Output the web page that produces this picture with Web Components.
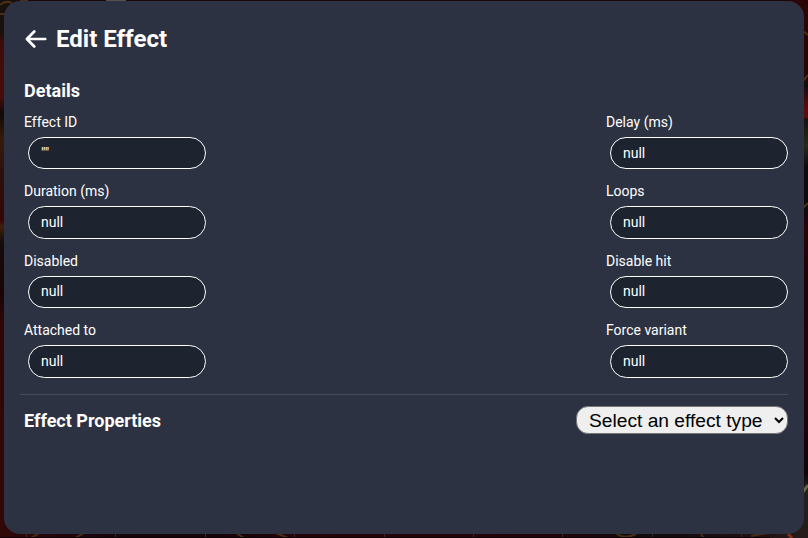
<!DOCTYPE html>
<html lang="en"><head><meta charset="utf-8"><title>Edit Effect</title>
<style>
html{background:#180407}
html,body{margin:0;height:100%;overflow:hidden}
body{font-family:Roboto,"Liberation Sans",sans-serif;color:#fff}
</style></head><body>
<effect-editor></effect-editor>
<script>
class SceneBackdrop extends HTMLElement{
 constructor(){super();this.attachShadow({mode:'open'}).innerHTML=`
<style>:host{position:absolute;inset:0;z-index:-1}svg{display:block}</style>
<svg width="808" height="538" viewBox="0 0 808 538">
<defs><linearGradient id="l" x2="0" y2="1"><stop stop-color="#17100c"/><stop offset=".06" stop-color="#17100c"/><stop offset=".08" stop-color="#400b0b"/><stop offset=".18" stop-color="#480c0b"/><stop offset=".21" stop-color="#100808"/><stop offset=".26" stop-color="#361b0b"/><stop offset=".32" stop-color="#2c1010"/><stop offset=".41" stop-color="#350505"/><stop offset=".42" stop-color="#40200a"/><stop offset=".45" stop-color="#160b0d"/><stop offset=".54" stop-color="#180406"/><stop offset=".6" stop-color="#2e0607"/><stop offset=".8" stop-color="#300809"/><stop offset="1" stop-color="#300807"/></linearGradient>
<linearGradient id="r" x2="0" y2="1"><stop stop-color="#2b0508"/><stop offset=".15" stop-color="#240608"/><stop offset=".16" stop-color="#0f0d0e"/><stop offset=".19" stop-color="#4d0b0e"/><stop offset=".217" stop-color="#620c0e"/><stop offset=".222" stop-color="#19100e"/><stop offset=".27" stop-color="#28291f"/><stop offset=".31" stop-color="#100b0b"/><stop offset=".38" stop-color="#0e090b"/><stop offset=".43" stop-color="#290409"/><stop offset=".52" stop-color="#1b0306"/><stop offset=".68" stop-color="#210609"/><stop offset=".88" stop-color="#130406"/><stop offset=".91" stop-color="#23201d"/><stop offset="1" stop-color="#261b1c"/></linearGradient>
<linearGradient id="b"><stop stop-color="#300807"/><stop offset=".12" stop-color="#1b050c"/><stop offset=".27" stop-color="#170309"/><stop offset=".4" stop-color="#270608"/><stop offset=".7" stop-color="#210408"/><stop offset=".8" stop-color="#100b10"/><stop offset=".95" stop-color="#241012"/><stop offset="1" stop-color="#241c1c"/></linearGradient></defs>
<rect width="808" height="20" fill="#1b0709"/><rect width="20" height="538" fill="url(#l)"/><rect x="788" width="20" height="538" fill="url(#r)"/><rect x="5" y="530" width="798" height="8" fill="url(#b)"/>
<g fill="none" stroke="#493014" stroke-width="2"><path d="M0 5Q5 0 12 3M20 1h8M0 14h5M803 31l5 4M803 81l5-6M803 208l5-5" /><path d="M31 538l10-6M75 538l9-5M236 533l8 5M276 533l12 5M616 533q8 7 20 1M700 533l4 5M751 536l16-3"/></g>
<path d="M803 492l5-7" stroke="#6b6548" stroke-width="3"/><path d="M788 534l4 4" stroke="#853018" stroke-width="3"/>
<path d="M106 0h20" stroke="#55504c" stroke-width="2"/>
<path d="M26.500 534v4M115.500 534v4M205.500 534v4M294.500 534v4M384.500 534v4M473.500 534v4M562.500 534v4M652.500 534v4M741.500 534v4" stroke="#3d2729"/>
<path d="M0 537.500h770" stroke="#0b0205"/>
</svg>`}}
customElements.define('scene-backdrop',SceneBackdrop);

class PageHeader extends HTMLElement{
 constructor(){super();this.attachShadow({mode:'open'}).innerHTML=`
<style>:host{display:flex;align-items:center;height:36px;padding-left:4px;gap:8px}
h1{margin:0;font-size:24px;line-height:36px;font-weight:700}svg{display:block;flex:none}</style>
<svg width="24" height="24" viewBox="0 0 24 24" fill="none" stroke="#fff" stroke-width="2.700" stroke-linecap="round" stroke-linejoin="round"><path d="M10.300 4.500 2.900 12l7.400 7.500M3 12h18.200"/></svg>
<h1><slot></slot></h1>`}}
customElements.define('page-header',PageHeader);

class EffectField extends HTMLElement{
 constructor(){super();this.attachShadow({mode:'open'}).innerHTML=`
<style>:host{display:block;width:182px;font-size:14px}
label{display:block;height:20px;line-height:18px}
.box{box-sizing:border-box;width:178px;height:32.500px;margin:4px 0 0 4px;padding:6.700px 12px 0;border:1px solid #fff;border-radius:17px;background:#1e242f;line-height:16px}</style>
<label><slot name="label"></slot></label><div class="box"><slot></slot></div>`}}
customElements.define('effect-field',EffectField);

class TypeSelect extends HTMLElement{
 constructor(){super();this.attachShadow({mode:'open'}).innerHTML=`
<style>:host{display:block}select{display:block;box-sizing:border-box;width:212px;height:28px;margin:0;padding:0 0 0 8px;border:1px solid #767676;border-radius:12px;background:#efefef;color:#000;font:19.200px "Liberation Sans",sans-serif}</style>
<select><option>Select an effect type</option></select>`}}
customElements.define('type-select',TypeSelect);

class EffectEditor extends HTMLElement{
 constructor(){super();this.attachShadow({mode:'open'}).innerHTML=`
<style>:host{display:block;padding:1px 4px 4px}
main{box-sizing:border-box;height:533px;padding:20px 16px;border-radius:16px;background:#2d3242;opacity:.999}
h2{margin:0;font-size:18px;line-height:24px;font-weight:700;padding-left:4px}
.details{margin-top:22px;height:24px}
.grid{display:grid;grid-template-columns:182px 182px;justify-content:space-between;grid-auto-rows:69.400px;margin-top:9.900px;padding-left:4px;height:281.200px}
.props{display:flex;justify-content:space-between;align-items:center;border-top:1px solid #4a4b59;padding-top:11px;height:28px}
.props h2{padding-top:2px}
</style><scene-backdrop></scene-backdrop>
<main><page-header>Edit Effect</page-header>
<h2 class="details">Details</h2>
<div class="grid">${[['Effect ID','""'],['Delay (ms)','null'],['Duration (ms)','null'],['Loops','null'],['Disabled','null'],['Disable hit','null'],['Attached to','null'],['Force variant','null']].map(([a,b])=>`<effect-field><span slot="label">${a}</span>${b}</effect-field>`).join('')}</div>
<div class="props"><h2>Effect Properties</h2><type-select></type-select></div></main>`}}
customElements.define('effect-editor',EffectEditor);
</script></body></html>
